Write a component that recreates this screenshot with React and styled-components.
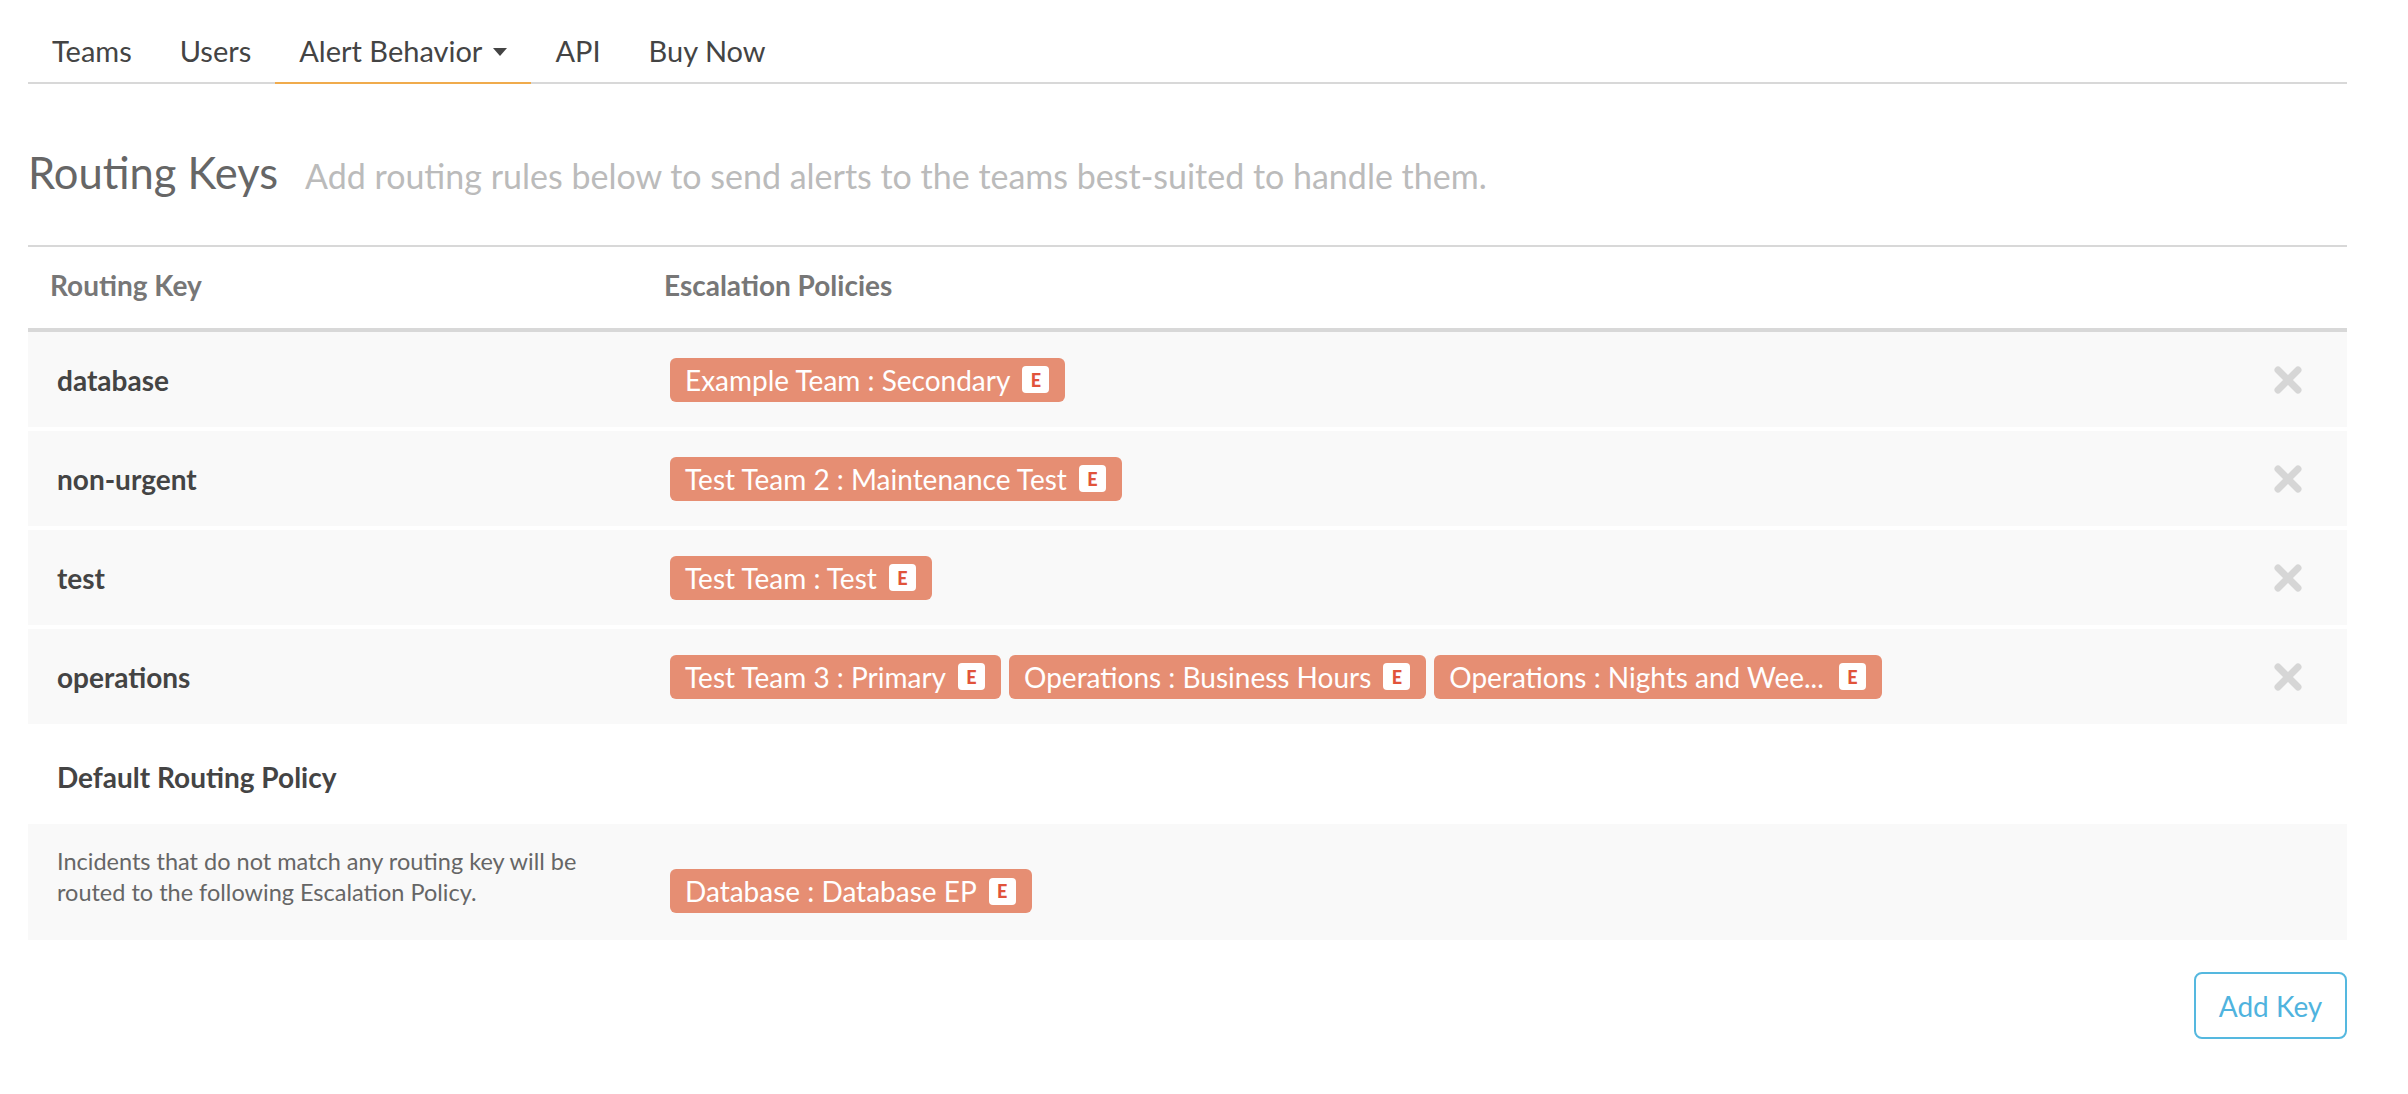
import React from 'react';
import styled, { createGlobalStyle } from 'styled-components';

const GlobalStyle = createGlobalStyle`
  body {
    margin: 0;
    background: #fff;
    font-family: Lato, "Open Sans", sans-serif;
    color: #444;
  }
  * { box-sizing: border-box; }
`;

const Page = styled.div`
  padding: 0 61px 40px 28px;
`;

const Nav = styled.ul`
  display: flex;
  margin: 0;
  padding: 0;
  list-style: none;
  border-bottom: 2px solid #d8d8d8;
`;

const NavItem = styled.li`
  display: flex;
  align-items: center;
  padding: 31px 24px 11px;
  margin-bottom: -2px;
  font-size: 29px;
  line-height: 40px;
  color: #444;
  border-bottom: 2px solid ${(p) => (p.$active ? '#f0ab4c' : 'transparent')};
`;

const Caret = styled.span`
  display: inline-block;
  margin-left: 11px;
  margin-top: 2px;
  border-top: 8px solid #444;
  border-left: 7px solid transparent;
  border-right: 7px solid transparent;
`;

const Heading = styled.div`
  display: flex;
  align-items: baseline;
  gap: 27px;
  margin: 63px 0 44px;
  line-height: 50px;
`;

const Title = styled.h1`
  margin: 0;
  font-size: 43.5px;
  font-weight: 400;
  color: #666;
`;

const Subtitle = styled.span`
  font-size: 34px;
  color: #bbb;
`;

const Table = styled.div`
  border-top: 2px solid #d8d8d8;
`;

const HeaderRow = styled.div`
  display: grid;
  grid-template-columns: 614px 1fr;
  padding: 18px 0 23px 22px;
  border-bottom: 4px solid #d8d8d8;
  font-size: 28px;
  line-height: 40px;
  font-weight: 700;
  color: #777;
`;

const Row = styled.div`
  display: grid;
  grid-template-columns: 642px 1fr 118px;
  align-items: center;
  min-height: 95px;
  margin-top: ${(p) => (p.$first ? '0' : '4px')};
  background: #f9f9f9;
`;

const KeyName = styled.div`
  padding-left: 29px;
  font-size: 28px;
  line-height: 40px;
  font-weight: 700;
  color: #444;
`;

const Pills = styled.div`
  display: flex;
  flex-wrap: wrap;
  gap: 8px;
  margin-top: ${(p) => p.$offset || 0}px;
`;

const Pill = styled.span`
  display: inline-flex;
  align-items: center;
  height: 44px;
  padding: 0 16px 0 15px;
  border-radius: 6px;
  background: #e68e73;
  color: #fff;
  font-size: 28px;
  white-space: nowrap;
`;

const Badge = styled.span`
  display: inline-flex;
  align-items: center;
  justify-content: center;
  width: 27px;
  height: 27px;
  margin-left: ${(p) => (p.$wide ? '15px' : '12px')};
  border-radius: 4px;
  background: #fff;
  color: #e1533b;
  font-size: 18px;
  font-weight: 900;
`;

const Remove = styled.button`
  justify-self: center;
  display: flex;
  padding: 0;
  border: 0;
  background: none;
  color: #d6d6d6;
  cursor: pointer;
`;

const DefaultTitle = styled.div`
  padding: 33px 0 27px 29px;
  font-size: 28px;
  line-height: 40px;
  font-weight: 700;
  color: #444;
`;

const DefaultBox = styled.div`
  display: grid;
  grid-template-columns: 642px 1fr;
  align-items: center;
  min-height: 116px;
  background: #f9f9f9;
`;

const Note = styled.p`
  margin: 0 0 11px;
  padding-left: 29px;
  max-width: 590px;
  font-size: 23.5px;
  line-height: 31px;
  color: #666;
`;

const Footer = styled.div`
  display: flex;
  justify-content: flex-end;
  margin-top: 32px;
`;

const AddButton = styled.button`
  width: 153px;
  height: 67px;
  border: 2px solid #55b8df;
  border-radius: 8px;
  background: #fff;
  color: #4fb3de;
  font-family: Lato, sans-serif;
  font-size: 28px;
  cursor: pointer;
`;

const CloseIcon = () => (
  <svg width="28" height="28" viewBox="0 0 28 28">
    <path d="M4 4 L24 24 M24 4 L4 24" stroke="currentColor" strokeWidth="7" strokeLinecap="round" />
  </svg>
);

const rows = [
  { key: 'database', policies: ['Example Team : Secondary'] },
  { key: 'non-urgent', policies: ['Test Team 2 : Maintenance Test'] },
  { key: 'test', policies: ['Test Team : Test'] },
  {
    key: 'operations',
    policies: ['Test Team 3 : Primary', 'Operations : Business Hours', 'Operations : Nights and Wee...'],
  },
];

const Policy = ({ name }) => (
  <Pill>
    {name}
    <Badge $wide={name.endsWith('...')}>E</Badge>
  </Pill>
);

export default function App() {
  return (
    <>
      <GlobalStyle />
      <Page>
        <Nav>
          <NavItem>Teams</NavItem>
          <NavItem>Users</NavItem>
          <NavItem $active>
            Alert Behavior
            <Caret />
          </NavItem>
          <NavItem>API</NavItem>
          <NavItem>Buy Now</NavItem>
        </Nav>

        <Heading>
          <Title>Routing Keys</Title>
          <Subtitle>Add routing rules below to send alerts to the teams best-suited to handle them.</Subtitle>
        </Heading>

        <Table>
          <HeaderRow>
            <div>Routing Key</div>
            <div>Escalation Policies</div>
          </HeaderRow>
          {rows.map((row, i) => (
            <Row key={row.key} $first={i === 0}>
              <KeyName>{row.key}</KeyName>
              <Pills>
                {row.policies.map((p) => (
                  <Policy key={p} name={p} />
                ))}
              </Pills>
              <Remove aria-label="Remove">
                <CloseIcon />
              </Remove>
            </Row>
          ))}
          <DefaultTitle>Default Routing Policy</DefaultTitle>
          <DefaultBox>
            <Note>Incidents that do not match any routing key will be routed to the following Escalation Policy.</Note>
            <Pills $offset={18}>
              <Policy name="Database : Database EP" />
            </Pills>
          </DefaultBox>
        </Table>

        <Footer>
          <AddButton>Add Key</AddButton>
        </Footer>
      </Page>
    </>
  );
}
